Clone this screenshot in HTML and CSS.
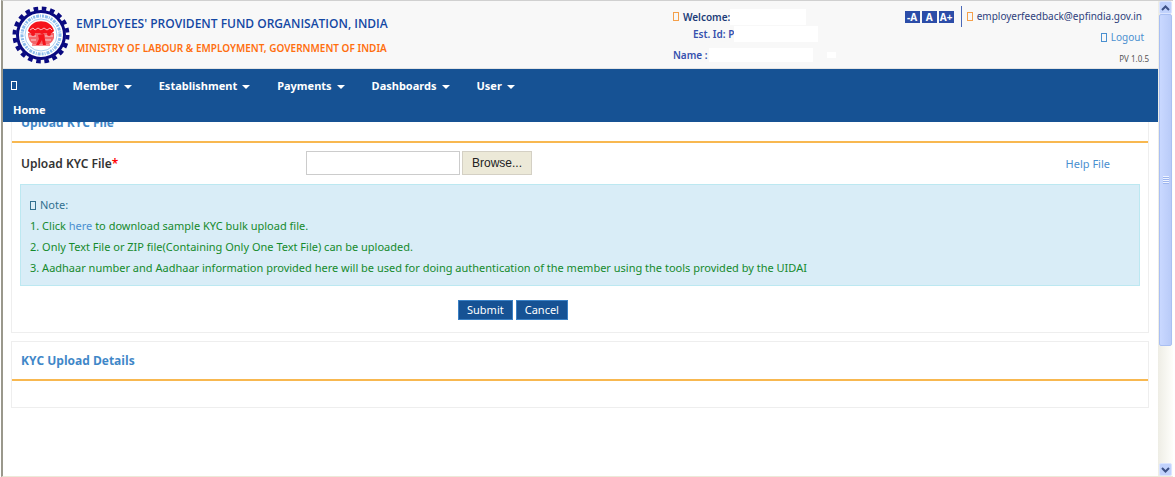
FILE: index.html
```
<!DOCTYPE html>
<html lang="en">
<head>
    <meta charset="UTF-8">
    <meta name="viewport" content="width=device-width, initial-scale=1.0">
    <title>Upload KYC File</title>
    <link rel="stylesheet" href="styles.css">
</head>
<body>
    <div class="window">
        <div class="page">
            <header class="header">
                <div class="brand">
                    <svg class="logo" viewBox="-29 -29 58 58" aria-label="EPFO logo">
                        <circle r="26.5" fill="none" stroke="#0a0a80" stroke-width="4" stroke-dasharray="4.6 3.726"/>
                        <circle r="23.5" fill="#fff" stroke="#0a0a80" stroke-width="3"/>
                        <circle r="19" fill="none" stroke="#8cbdec" stroke-width="3" stroke-dasharray="2 1 3 1 1 1"/>
                        <circle r="16" fill="none" stroke="#a8cff2" stroke-width="1"/>
                        <path d="M-13 -4C-10 -17 10 -17 13 -4L11 -2L-11 -2Z" fill="#f5141c"/>
                        <path d="M-13 -2H13V3C12 6 10 8 8 9H-8C-11 7 -13 4 -13 -2Z" fill="#f4666a"/>
                        <path d="M-11 -5L-8 -7L-6 -5L-3 -7L0 -5L3 -7L6 -5L9 -7L11 -5M-12 1H-5M4 1H12M-10 5H-5M4 5H10" fill="none" stroke="#fff" stroke-width="0.7"/>
                        <circle cx="-8" cy="-1" r="2" fill="#f5141c"/>
                        <circle cx="8" cy="-1" r="2" fill="#f5141c"/>
                        <circle cx="1" cy="-3" r="2" fill="#f5141c"/>
                        <path d="M-3 0L3 -1L5 10L2 10L1 5L-2 10L-5 10L-2 4Z" fill="#f5141c"/>
                        <path d="M-9 10H9" stroke="#f5141c" stroke-width="1"/>
                    </svg>
                    <div class="titles">
                        <div class="org">EMPLOYEES' PROVIDENT FUND ORGANISATION, INDIA</div>
                        <div class="ministry">MINISTRY OF LABOUR &amp; EMPLOYMENT, GOVERNMENT OF INDIA</div>
                    </div>
                </div>
                <div class="user-info">
                    <div class="user-row welcome"><i class="glyph orange"></i>Welcome:<span class="blank"></span></div>
                    <div class="user-row est">Est. Id: P<span class="blank"></span></div>
                    <div class="user-row name">Name :<span class="blank"></span><span class="blank tiny"></span></div>
                </div>
                <div class="tools">
                    <div class="tools-top">
                        <div class="font-size">
                            <button type="button">-A</button>
                            <button type="button">A</button>
                            <button type="button">A+</button>
                        </div>
                        <a class="mail" href="#"><i class="glyph orange"></i>employerfeedback@epfindia.gov.in</a>
                    </div>
                    <a class="logout" href="#"><i class="glyph"></i>Logout</a>
                    <div class="version">PV 1.0.5</div>
                </div>
            </header>

            <nav class="navbar">
                <a class="home" href="#"><i class="glyph"></i><span>Home</span></a>
                <a href="#">Member<b class="caret"></b></a>
                <a href="#">Establishment<b class="caret"></b></a>
                <a href="#">Payments<b class="caret"></b></a>
                <a href="#">Dashboards<b class="caret"></b></a>
                <a href="#">User<b class="caret"></b></a>
            </nav>

            <main class="content">
                <section class="panel">
                    <h2>Upload KYC File</h2>
                    <form class="panel-body">
                        <div class="file-row">
                            <label for="kyc-file">Upload KYC File<span class="required">*</span></label>
                            <div class="file-box">
                                <input type="text" id="kyc-file">
                                <button type="button">Browse...</button>
                            </div>
                            <a class="help" href="#">Help File</a>
                        </div>
                        <div class="note">
                            <div class="note-title"><i class="glyph"></i>Note:</div>
                            <div>1. Click <a href="#">here</a> to download sample KYC bulk upload file.</div>
                            <div>2. Only Text File or ZIP file(Containing Only One Text File) can be uploaded.</div>
                            <div>3. Aadhaar number and Aadhaar information provided here will be used for doing authentication of the member using the tools provided by the UIDAI</div>
                        </div>
                        <div class="actions">
                            <button type="submit">Submit</button>
                            <button type="reset">Cancel</button>
                        </div>
                    </form>
                </section>

                <section class="panel">
                    <h2>KYC Upload Details</h2>
                    <div class="details"></div>
                </section>
            </main>
        </div>

        <div class="scrollbar">
            <button type="button" class="arrow" aria-label="Scroll up">
                <svg viewBox="0 0 9 6"><path d="M1 5L4.500 1.500L8 5" /></svg>
            </button>
            <div class="track">
                <div class="thumb"><span class="grip"></span></div>
            </div>
            <button type="button" class="arrow" aria-label="Scroll down">
                <svg viewBox="0 0 9 6"><path d="M1 1L4.500 4.500L8 1" /></svg>
            </button>
        </div>
    </div>
</body>
</html>
```
FILE: styles.css
```
* {
    box-sizing: border-box;
}

body {
    margin: 0;
    background-color: #fff;
    color: #333;
    font-family: "Noto Sans", "Open Sans", sans-serif;
    font-size: 12px;
}

a {
    color: #4a90d0;
    text-decoration: none;
}

button {
    font-family: inherit;
    margin: 0;
}

.window {
    display: flex;
    height: 100vh;
    margin: 0 2px 0 1px;
    border-top: 1px solid #d0d0d0;
    border-left: 2px solid #9a988c;
    border-bottom: 1px solid #ece9d8;
}

.page {
    flex: 1;
    min-width: 0;
    overflow: hidden;
}

/* missing icon box */
.glyph {
    display: inline-block;
    width: 6px;
    height: 9px;
    margin-right: 4px;
    border: 1px solid currentColor;
    vertical-align: -1px;
}

.orange {
    color: #f5a04a;
}

/* header */
.header {
    display: grid;
    grid-template-columns: 58% 1fr auto;
    height: 68px;
    background-color: #f8f8f8;
    border-bottom: 1px solid #e4e4e4;
}

.brand {
    display: flex;
    align-items: center;
    padding-left: 9px;
}

.logo {
    width: 58px;
    height: 58px;
}

.titles {
    margin-left: 6px;
    padding-top: 2px;
    font-weight: 600;
    line-height: 24px;
    white-space: nowrap;
}

.org {
    color: #1448a4;
    font-family: "Open Sans", sans-serif;
    font-size: 12px;
}

.ministry {
    color: #ff6f0f;
    font-size: 10px;
}

.user-info {
    padding-top: 7px;
    color: #3550ae;
    font-size: 10px;
    font-weight: 600;
}

.user-row {
    display: flex;
    align-items: center;
    height: 17px;
    white-space: nowrap;
}

.welcome {
    color: #1c3c78;
}

.est {
    padding-left: 20px;
}

.name {
    margin-top: 4px;
}

.blank {
    width: 76px;
    height: 16px;
    background-color: #fff;
}

.est .blank {
    width: 84px;
}

.name .blank {
    width: 104px;
    height: 14px;
    margin-left: 2px;
}

.name .tiny {
    width: 9px;
    height: 6px;
    margin-left: 14px;
}

.tools {
    display: flex;
    flex-direction: column;
    align-items: flex-end;
    padding: 5px 9px 0 0;
    line-height: 21px;
}

.tools-top {
    display: flex;
    padding-right: 7px;
}

.font-size {
    display: flex;
    align-items: center;
    gap: 2px;
    padding-right: 7px;
    border-right: 1px solid #4a68b8;
}

.font-size button {
    width: 15px;
    height: 12px;
    padding: 0;
    border: none;
    background-color: #2c4da8;
    color: #fff;
    font-size: 10px;
    font-weight: bold;
    line-height: 12px;
}

.mail {
    padding-left: 5px;
    color: #2e3f7c;
    font-size: 10px;
}

.logout {
    padding-right: 5px;
    font-size: 10px;
}

.version {
    color: #555;
    font-size: 8px;
}

/* menu */
.navbar {
    position: relative;
    z-index: 1;
    display: flex;
    gap: 27px;
    height: 53px;
    padding: 5px 7px;
    background-color: #165294;
    line-height: 24px;
    font-size: 11px;
    font-weight: bold;
}

.navbar a {
    color: #fff;
}

.home {
    display: flex;
    flex-direction: column;
}

.home .glyph {
    margin: 7px 0 8px 1px;
    flex: none;
}

.home span {
    padding-left: 3px;
}

.caret {
    display: inline-block;
    margin-left: 5px;
    vertical-align: middle;
    border-top: 4px solid #fff;
    border-left: 4px solid transparent;
    border-right: 4px solid transparent;
}

/* panels, the first one is scrolled under the menu */
.content {
    margin: -19px 9px 0 8px;
}

.panel {
    margin-bottom: 8px;
    border: 1px solid #eee;
}

.panel h2 {
    margin: 0;
    padding: 0 9px;
    border-bottom: 2px solid #f8b850;
    color: #3f87c8;
    font-family: "Open Sans", sans-serif;
    font-size: 12px;
    font-weight: bold;
    line-height: 37px;
}

.panel-body {
    padding: 8px 8px 12px;
}

.file-row {
    display: flex;
    align-items: center;
    margin-bottom: 9px;
}

.file-row label {
    width: 25%;
    padding-left: 1px;
    font-weight: 600;
}

.required {
    color: #f00;
}

.file-box {
    display: flex;
    flex: 1;
    gap: 2px;
    padding-left: 6px;
}

.file-box input {
    width: 154px;
    height: 24px;
    border: 1px solid #ccc;
}

.file-box button {
    width: 70px;
    height: 24px;
    padding: 0;
    border: 1px solid #d4d0c4;
    background-color: #ece9d8;
    color: #222;
    font-family: "Liberation Sans", sans-serif;
    font-size: 12px;
}

.help {
    padding-right: 30px;
    font-size: 11px;
}

.note {
    padding: 9px 9px 7px;
    border: 1px solid #bce8f1;
    background-color: #d9edf7;
    color: #158a2c;
    font-size: 11px;
    line-height: 21px;
}

.note-title {
    color: #31708f;
}

.actions {
    display: flex;
    justify-content: center;
    gap: 3px;
    margin-top: 14px;
    padding-right: 134px;
}

.actions button {
    height: 20px;
    padding: 0 8px;
    border: 1px solid #3a80c4;
    background-color: #165294;
    color: #fff;
    font-size: 11px;
    line-height: 18px;
}

.details {
    height: 26px;
}

/* scrollbar */
.scrollbar {
    display: flex;
    flex-direction: column;
    width: 15px;
    background: linear-gradient(to right, #eeede5, #fefefb);
}

.arrow {
    display: flex;
    align-items: center;
    justify-content: center;
    height: 13px;
    margin: 0 1px;
    padding: 0;
    border: 1px solid #dbe5ff;
    border-radius: 2px;
    background-color: #c1d2fc;
}

.arrow svg {
    width: 9px;
    height: 6px;
    fill: none;
    stroke: #3d5186;
    stroke-width: 2;
}

.track {
    flex: 1;
}

.thumb {
    display: flex;
    align-items: center;
    justify-content: center;
    height: 74%;
    margin: 0 1px;
    border: 1px solid #a9bff2;
    border-radius: 2px;
    background: linear-gradient(to right, #c9d8ff, #b9cbf8);
}

.grip {
    width: 6px;
    height: 8px;
    background: repeating-linear-gradient(#eef3ff 0 1px, #9db5ee 1px 2px);
}
```
